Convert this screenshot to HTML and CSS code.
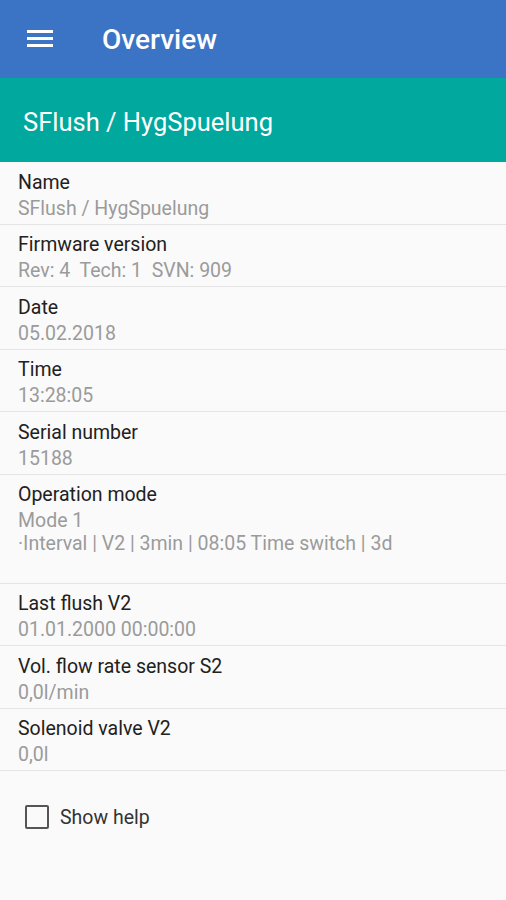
FILE: index.html
```html
<!DOCTYPE html>
<html lang="en">
<head>
  <meta charset="UTF-8">
  <title>Overview</title>
  <link rel="stylesheet" href="styles.css">
</head>
<body>

<div class="toolbar">
  <svg class="menu" width="26" height="20" viewBox="0 0 26 20">
    <rect x="0" y="2" width="26" height="3" fill="#fff"/>
    <rect x="0" y="9" width="26" height="3" fill="#fff"/>
    <rect x="0" y="16" width="26" height="3" fill="#fff"/>
  </svg>
  <span class="title">Overview</span>
</div>

<div class="device">SFlush / HygSpuelung</div>

<div class="list">
  <div class="item">
    <div class="label">Name</div>
    <div class="value">SFlush / HygSpuelung</div>
  </div>
  <div class="item">
    <div class="label">Firmware version</div>
    <div class="value">Rev: 4&nbsp; Tech: 1&nbsp; SVN: 909</div>
  </div>
  <div class="item">
    <div class="label">Date</div>
    <div class="value">05.02.2018</div>
  </div>
  <div class="item">
    <div class="label">Time</div>
    <div class="value">13:28:05</div>
  </div>
  <div class="item">
    <div class="label">Serial number</div>
    <div class="value">15188</div>
  </div>
  <div class="item">
    <div class="label">Operation mode</div>
    <div class="value">Mode 1<br>·Interval | V2 | 3min | 08:05 Time switch | 3d<br>&nbsp;</div>
  </div>
  <div class="item">
    <div class="label">Last flush V2</div>
    <div class="value">01.01.2000 00:00:00</div>
  </div>
  <div class="item">
    <div class="label">Vol. flow rate sensor S2</div>
    <div class="value">0,0l/min</div>
  </div>
  <div class="item">
    <div class="label">Solenoid valve V2</div>
    <div class="value">0,0l</div>
  </div>
</div>

<label class="help">
  <span class="box"></span>
  Show help
</label>

</body>
</html>
```

FILE: styles.css
```css
html, body { margin: 0; height: 100%; }
body { font-family: Roboto, "Noto Sans", sans-serif; background: #fafafa; width: 506px; }

.toolbar { height: 78px; background: #3b74c5; display: flex; align-items: center; padding-left: 27px; box-sizing: border-box; }
.toolbar .menu { display: block; margin-top: -2px; }
.toolbar .title { color: #fff; font-size: 28px; font-weight: 500; margin-left: 49px; }

.device { height: 84px; background: #00a89e; color: #fff; font-size: 25.5px; display: flex; align-items: center; padding: 4px 0 0 23px; box-sizing: border-box; }

.item { padding: 8.5px 18px 4.1px; border-bottom: 1px solid #e4e4e4; }
.label { font-size: 19.5px; line-height: 24px; color: #212121; }
.value { font-size: 19.5px; line-height: 23px; margin-top: 2px; color: #9b9b9b; }

.help { display: flex; align-items: center; margin: 34px 0 0 25px; font-size: 19.5px; color: #333; }
.help .box { width: 20px; height: 20px; border: 2px solid #555; border-radius: 2px; margin-right: 11px; }
```
